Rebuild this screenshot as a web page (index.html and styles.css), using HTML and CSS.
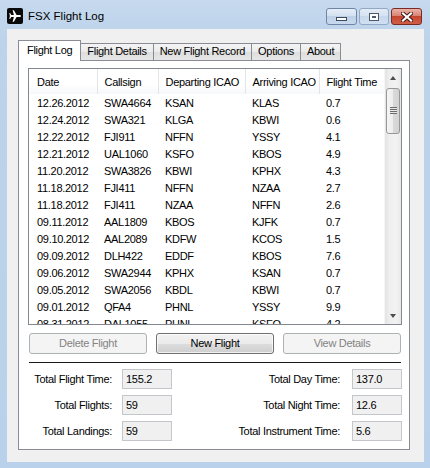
FILE: index.html
```html
<!DOCTYPE html>
<html lang="en">
<head>
<meta charset="UTF-8" />
<title>FSX Flight Log</title>
<link rel="stylesheet" href="styles.css">
</head>
<body>
	<div class="window">
		<!-- title bar -->
		<div class="titlebar">
			<svg class="app-icon" width="16" height="16" viewBox="0 0 16 16">
				<rect x="0" y="0" width="16" height="16" rx="2" fill="#0a0a0a"/>
				<path d="M14 8c0-.7-.7-1.1-1.6-1.1H9.6L6.9 2.3H5.6l1.3 4.6H4.2L3.1 5H2.3l.6 3-.6 3h.8l1.1-1.9h2.7l-1.3 4.6h1.3l2.7-4.6h2.8C13.3 9.1 14 8.7 14 8z" fill="#fff"/>
			</svg>
			<span class="title">FSX Flight Log</span>
			<div class="caption-buttons">
				<div class="cap cap-min"><span class="min-glyph"></span></div>
				<div class="cap cap-max"><span class="max-glyph"></span></div>
				<div class="cap cap-close">
					<svg width="12" height="10" viewBox="0 0 12 10">
						<path d="M2 1.5L10 8.5M10 1.5L2 8.5" stroke="#3a1410" stroke-width="4" stroke-linecap="square"/>
						<path d="M2 1.5L10 8.5M10 1.5L2 8.5" stroke="#fff" stroke-width="2.2" stroke-linecap="square"/>
					</svg>
				</div>
			</div>
		</div>

		<!-- client area -->
		<div class="client">
			<div class="tabs">
				<div class="tab active">Flight Log</div>
				<div class="tab">Flight Details</div>
				<div class="tab">New Flight Record</div>
				<div class="tab">Options</div>
				<div class="tab">About</div>
			</div>
			<div class="tab-page">
				<div class="listview">
					<div class="lv-main">
						<table class="lv-table">
							<colgroup>
								<col class="c-date"><col class="c-call"><col class="c-dep"><col class="c-arr"><col class="c-time">
							</colgroup>
							<thead>
								<tr><th>Date</th><th>Callsign</th><th>Departing ICAO</th><th>Arriving ICAO</th><th>Flight Time</th></tr>
							</thead>
							<tbody>
								<tr><td>12.26.2012</td><td>SWA4664</td><td>KSAN</td><td>KLAS</td><td>0.7</td></tr>
								<tr><td>12.24.2012</td><td>SWA321</td><td>KLGA</td><td>KBWI</td><td>0.6</td></tr>
								<tr><td>12.22.2012</td><td>FJI911</td><td>NFFN</td><td>YSSY</td><td>4.1</td></tr>
								<tr><td>12.21.2012</td><td>UAL1060</td><td>KSFO</td><td>KBOS</td><td>4.9</td></tr>
								<tr><td>11.20.2012</td><td>SWA3826</td><td>KBWI</td><td>KPHX</td><td>4.3</td></tr>
								<tr><td>11.18.2012</td><td>FJI411</td><td>NFFN</td><td>NZAA</td><td>2.7</td></tr>
								<tr><td>11.18.2012</td><td>FJI411</td><td>NZAA</td><td>NFFN</td><td>2.6</td></tr>
								<tr><td>09.11.2012</td><td>AAL1809</td><td>KBOS</td><td>KJFK</td><td>0.7</td></tr>
								<tr><td>09.10.2012</td><td>AAL2089</td><td>KDFW</td><td>KCOS</td><td>1.5</td></tr>
								<tr><td>09.09.2012</td><td>DLH422</td><td>EDDF</td><td>KBOS</td><td>7.6</td></tr>
								<tr><td>09.06.2012</td><td>SWA2944</td><td>KPHX</td><td>KSAN</td><td>0.7</td></tr>
								<tr><td>09.05.2012</td><td>SWA2056</td><td>KBDL</td><td>KBWI</td><td>0.7</td></tr>
								<tr><td>09.01.2012</td><td>QFA4</td><td>PHNL</td><td>YSSY</td><td>9.9</td></tr>
								<tr><td>08.31.2012</td><td>DAL1055</td><td>PHNL</td><td>KSFO</td><td>4.2</td></tr>
							</tbody>
						</table>
					</div>
					<div class="scrollbar">
						<div class="sb-arrow"><span class="tri-up"></span></div>
						<div class="sb-track">
							<div class="sb-thumb"><span class="grip"></span></div>
						</div>
						<div class="sb-arrow"><span class="tri-down"></span></div>
					</div>
				</div>

				<div class="buttons">
					<div class="btn disabled">Delete Flight</div>
					<div class="btn">New Flight</div>
					<div class="btn disabled">View Details</div>
				</div>

				<div class="separator"></div>

				<div class="stats">
					<div class="lbl lbl-l">Total Flight Time:</div><div class="box">155.2</div>
					<div class="lbl lbl-r">Total Day Time:</div><div class="box">137.0</div>
					<div class="lbl lbl-l">Total Flights:</div><div class="box">59</div>
					<div class="lbl lbl-r">Total Night Time:</div><div class="box">12.6</div>
					<div class="lbl lbl-l">Total Landings:</div><div class="box">59</div>
					<div class="lbl lbl-r">Total Instrument Time:</div><div class="box">5.6</div>
				</div>
			</div>
		</div>
	</div>
</body>
</html>
```

FILE: styles.css
```css
* {box-sizing: border-box;}
body {margin: 0; font-family: "Liberation Sans", Arial, sans-serif; font-size: 11px; letter-spacing: -0.3px; color: #000;}

/* window frame */
.window {width: 430px; height: 468px; display: flex; flex-direction: column; background: linear-gradient(to bottom, #c6d9ee 0, #bcd3ea 40px, #b9d1ea 100%);}
.titlebar {height: 29px; display: flex; align-items: flex-start; padding: 8px 8px 0 7px;}
.app-icon {display: block; margin-right: 5px;}
.title {font-size: 11.5px; letter-spacing: 0; line-height: 17px; color: #000;}
.caption-buttons {margin-left: auto; display: flex; gap: 2px;}
.cap {height: 17px; border: 1px solid #6e85a5; border-radius: 3px; display: flex; align-items: center; justify-content: center;}
.cap-min {width: 31px; background: linear-gradient(to bottom, #e6eef8 0, #d3e1f1 45%, #bdd0e8 50%, #c9daee 100%); align-items: flex-end; padding-bottom: 3px;}
.cap-max {width: 30px; margin-left: 0; border-color: #93a8c4; background: linear-gradient(to bottom, #e3ebf5 0, #d7e3f1 45%, #c7d8ec 50%, #d1e0f1 100%);}
.cap-close {width: 31px; border-color: #7a2a22; background: linear-gradient(to bottom, #eab2a8 0, #d98473 45%, #c6452f 50%, #d25e48 100%);}
.min-glyph {width: 11px; height: 4px; background: #fff; border: 1px solid #3c4a5e;}
.max-glyph {width: 10px; height: 8px; background: #fff; border: 1px solid #4c5a6e; box-shadow: inset 0 0 0 2px #fff, inset 0 0 0 3px #4c5a6e;}
.cap-close svg {display: block;}

/* client */
.client {flex: 1; margin: 0 6px 6px 7px; background: #f0f0f0; padding: 11px 14px 12px 11px; display: flex; flex-direction: column;}

/* tabs */
.tabs {display: flex; align-items: flex-end; height: 20px; padding-left: 2px;}
.tab {height: 17px; line-height: 15px; padding: 0 6px; border: 1px solid #898c95; border-bottom: 0; margin-right: -1px; background: linear-gradient(to bottom, #f4f4f4 0, #ebebeb 50%, #dedede 51%, #e6e6e6 100%); white-space: nowrap;}
.tab.active {height: 21px; line-height: 18px; padding: 0 8px; margin: 0 -1px -1px -2px; background: #fff; position: relative; z-index: 1;}
.tab-page {height: 390px; border: 1px solid #898c95; background: #fff; padding: 7px 7px 0 9px;}

/* list view */
.listview {height: 257px; border: 1px solid #828790; display: flex; background: #fff;}
.lv-main {flex: 1; overflow: hidden;}
.lv-table {border-collapse: collapse; table-layout: fixed; width: 355px;}
.c-date {width: 68px;}
.c-call {width: 61px;}
.c-dep {width: 87px;}
.c-arr {width: 74px;}
.c-time {width: 65px;}
.lv-table th {height: 25px; font-weight: normal; text-align: left; padding: 0 0 0 7px; border-right: 1px solid #e3e5e8; background: linear-gradient(to bottom, #fff 0, #fff 60%, #f7f8fa 100%); white-space: nowrap; overflow: hidden;}
.lv-table th:first-child, .lv-table td:first-child {padding-left: 8px;}
.lv-table td {height: 17px; padding: 0 0 0 7px; white-space: nowrap; overflow: hidden;}

/* scroll bar */
.scrollbar {width: 17px; display: flex; flex-direction: column; background: linear-gradient(to right, #e3e3e3 0, #efefef 30%, #f2f2f2 70%, #e8e8e8 100%); border-left: 1px solid #f6f6f6;}
.sb-arrow {height: 17px; display: flex; align-items: center; justify-content: center;}
.sb-track {flex: 1; padding: 2px 1px 0 1px;}
.sb-thumb {height: 46px; border: 1px solid #979797; border-radius: 3px; background: linear-gradient(to right, #f5f5f5 0, #ececec 50%, #d9d9d9 51%, #d3d3d3 100%); display: flex; align-items: center; justify-content: center; padding-bottom: 2px;}
.grip {width: 7px; height: 7px; background: repeating-linear-gradient(to bottom, #6b6b6b 0, #6b6b6b 1px, #e8e8e8 1px, #e8e8e8 2px);}
.tri-up {width: 0; height: 0; border-left: 3.5px solid transparent; border-right: 3.5px solid transparent; border-bottom: 4px solid #4d4d4d;}
.tri-down {width: 0; height: 0; border-left: 3.5px solid transparent; border-right: 3.5px solid transparent; border-top: 4px solid #4d4d4d;}

/* buttons */
.buttons {display: grid; grid-template-columns: 1fr 1fr 1fr; column-gap: 9px; margin-top: 8px; padding: 0 1px;}
.btn {height: 21px; line-height: 19px; text-align: center; border: 1px solid #707070; border-radius: 3px; background: linear-gradient(to bottom, #f2f2f2 0, #ebebeb 50%, #dddddd 51%, #cfcfcf 100%); box-shadow: inset 0 0 0 1px rgba(255,255,255,0.7);}
.btn.disabled {border-color: #adb2b5; background: #f4f4f4; color: #838383; box-shadow: none;}

.separator {margin: 8px 1px 0 1px; border-top: 1px solid #1a1a1a;}

/* totals */
.stats {display: grid; grid-template-columns: 84px 50px 1fr 50px; column-gap: 9px; row-gap: 6px; margin-top: 6px; padding-left: 1px;}
.lbl {height: 20px; line-height: 20px; text-align: right; white-space: nowrap;}
.lbl-l {padding-right: 1px;}
.lbl-r {padding-right: 3px;}
.box {height: 20px; line-height: 18px; padding-left: 3px; background: #f0f0f0; border: 1px solid #c3c6ca;}
```
